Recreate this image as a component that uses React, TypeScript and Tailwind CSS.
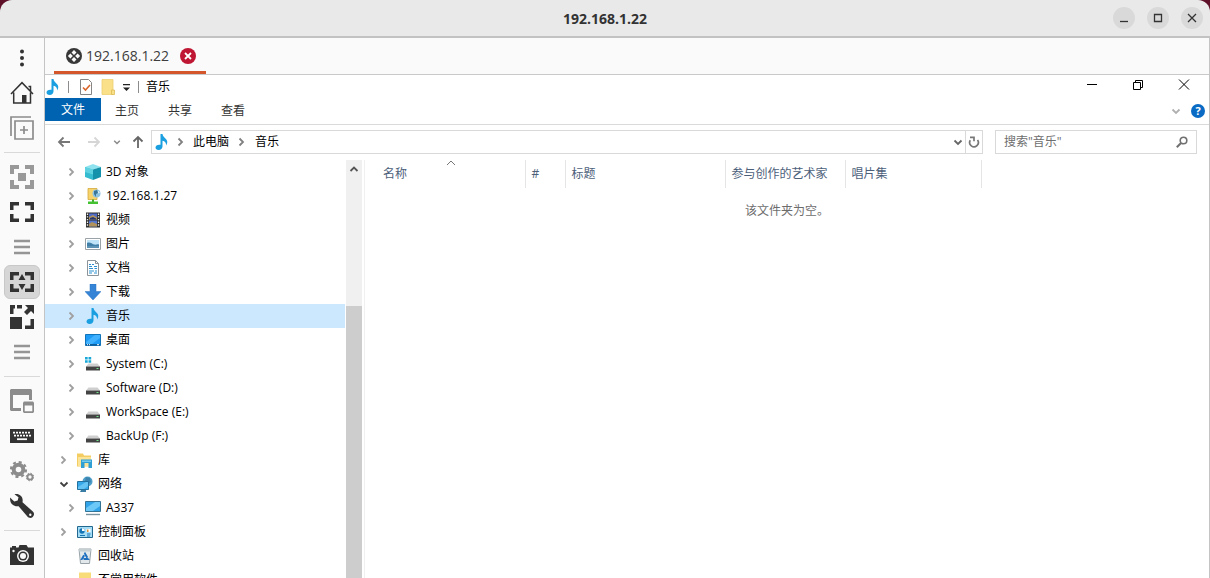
import type { ReactNode } from 'react'

type TreeItem = {
  label: string
  icon: keyof typeof TREE_ICONS
  level: 0 | 1
  state?: 'open' | 'closed'
  selected?: boolean
}

const NOTE = 'M6.5 0h2c.3 2.2 1.6 3.2 2.9 4.5 2.300 2.100 2.500 4.300.7 7.100.2-2.800-1.200-4.200-3.600-4.800v5.400c0 2.200-1.600 3.800-3.900 3.800-1.900 0-3.100-1-3.100-2.500 0-2 2.300-3.300 5-2.700z'

function MusicIcon() {
  return (
    <svg className="h-4 w-4 shrink-0" viewBox="0 0 16 16">
      <path d={NOTE} fill="#1a9fe0" />
    </svg>
  )
}

function Chevron({ dir, className }: { dir: 'right' | 'down' | 'up'; className: string }) {
  const d = { right: 'M2.5 1.5L6 5 2.5 8.500', down: 'M1.500 3.500L5 7l3.500-3.500', up: 'M1.500 7L5 3.500 8.500 7' }[dir]
  return (
    <svg className={className} viewBox="0 0 10 10" fill="none" stroke="currentColor" strokeWidth={1.8}>
      <path d={d} />
    </svg>
  )
}

function Drive() {
  return (
    <>
      <path d="M3.5 7.5h9l2.500 3H1z" fill="#cfcfcf" />
      <path d="M1 10.500h14v4H1z" fill="#444" />
      <path d="M11.500 12h2v1h-2z" fill="#6fe08a" />
    </>
  )
}

const TREE_ICONS = {
  cube: (
    <>
      <path d="M0 3l8-3 8 3-8 2.500z" fill="#8fe3ee" />
      <path d="M0 3l8 2.500V16l-8-3z" fill="#35bcd0" />
      <path d="M8 5.500L16 3v10l-8 3z" fill="#1592ab" />
      <path d="M0 3l8 2.500v5L0 8z" fill="#5fd2e1" />
    </>
  ),
  ftp: (
    <>
      <path d="M3 .5h9v11H3z" fill="#f7d36b" stroke="#d5a93b" strokeWidth=".8" />
      <circle cx="11.500" cy="5.500" r="4" fill="#8cc4e2" />
      <path d="M9 3l3-1 1 3-2 1v3l-2-3z" fill="#3a7699" />
      <path d="M13 2.500l2 2-2 1z" fill="#d9f0fa" />
      <path d="M7 11.500h2v2.500H7z" fill="#3dae2b" />
      <path d="M3 13.500h10V16H3z" fill="#45c232" />
    </>
  ),
  video: (
    <>
      <path d="M1 .5h14v15H1z" fill="#2f2f2f" />
      <path d="M4 1.500h8v6H4z" fill="#506cc7" />
      <path d="M4 8.500h8v6H4z" fill="#5577cf" />
      <path d="M4 5l4-2 4 2.500v2H4zM4 12l3-2 5 2v2.500H4z" fill="#b0925a" />
      <path d="M5 6l3-1 3 1.500v1H5z" fill="#26366e" />
      <path d="M2.500 1.500v13M13.500 1.500v13" stroke="#f2f2f2" strokeWidth="1.300" strokeDasharray="1.400 1.300" />
    </>
  ),
  picture: (
    <>
      <path d="M.5 2.500h15v11H.5z" fill="#fff" stroke="#9aa3a8" />
      <path d="M2 4h12v8H2z" fill="#bfe3f7" />
      <path d="M2 7c3-1.500 5 1 7 1.500s3-.5 5 0v2H2z" fill="#3f7fa8" />
      <path d="M2 10h12v2H2z" fill="#5c93b4" />
    </>
  ),
  document: (
    <>
      <path d="M2.500.5h8l3 3v12h-11z" fill="#fff" stroke="#8b9499" />
      <path d="M10.500.5v3h3" fill="none" stroke="#8b9499" />
      <path d="M4 4.500h2m1 0h2M4 6.500h3m2 0h3M4 8.500h4M4 11h5m1 0h2M4 13h3m2 0h3M9.500 8.500H12" stroke="#2d8fd0" strokeWidth="1.200" />
    </>
  ),
  download: <path d="M5 0h6v7.500h5L8 16 0 7.500h5z" fill="#3584d6" stroke="#2a74c2" strokeWidth=".5" />,
  music: <path d={NOTE} fill="#1a9fe0" />,
  desktop: (
    <>
      <path d="M.5 2.500h15v11H.5z" fill="#1e9bf5" stroke="#1173b8" />
      <path d="M1 10l9-7h5v3l-8 6H1z" fill="#42b2ff" />
      <path d="M1 12h14v1.500H1z" fill="#0f5f9b" />
      <path d="M2 12.700h1m1 0h1m7 0h2" stroke="#fff" />
    </>
  ),
  system: (
    <>
      <path d="M0 1h2.700v2.500H0zM3.500 1h2.700v2.500H3.500zM0 4.200h2.700v2.500H0zM3.500 4.200h2.700v2.500H3.500z" fill="#19a9d8" />
      <Drive />
    </>
  ),
  drive: <Drive />,
  library: (
    <>
      <path d="M0 1.500h6l1 2h7v11H0z" fill="#f3cd62" />
      <path d="M1 5h13v9H1z" fill="#fbe397" />
      <path d="M4 7.500h11V16h-3.500v-5h-4v5H4z" fill="#2f9fd4" />
      <path d="M5 8.500h9v1.500H5z" fill="#76cbec" />
    </>
  ),
  network: (
    <>
      <circle cx="10.500" cy="5.500" r="5" fill="#4f9fca" />
      <path d="M9 1l4 1 1 4-3 2-3-3z" fill="#3a84af" />
      <path d="M.5 5.500h11v8H.5z" fill="#37a9ea" stroke="#23719f" />
      <path d="M1 11l8-5h2v4l-4 3H1z" fill="#66c4f4" />
      <path d="M4 14h5v2H3z" fill="#397da5" />
    </>
  ),
  computer: (
    <>
      <path d="M.5 1.500h15v10H.5z" fill="#31a3e8" stroke="#347394" />
      <path d="M1 8l9-6h5v4l-7 5H1z" fill="#6bc8f7" />
      <path d="M1 14.500h14" stroke="#79929f" strokeWidth="1.400" />
    </>
  ),
  control: (
    <>
      <path d="M.5 2.500h15v11H.5z" fill="#a5dcf6" stroke="#23688f" />
      <circle cx="5" cy="7" r="2.700" fill="#1675b6" />
      <path d="M5 7V4.300A2.700 2.700 0 017.700 7z" fill="#fff" />
      <path d="M9.500 5h4v3h-4z" fill="#fff" />
      <path d="M10 5.500h1.500V8H10z" fill="#e08b2e" />
      <path d="M3 11.500h5m2-1.500h3.500M10 12h3" stroke="#1675b6" strokeWidth="1.200" />
    </>
  ),
  recycle: (
    <>
      <path d="M2 1h12l-1.500 14.500h-9z" fill="#e3e8ea" stroke="#98a3a9" />
      <path d="M2 1h12l-.3 2.500H2.300z" fill="#c5ced2" />
      <path d="M8 5.800l3 5.200H5z" fill="none" stroke="#1f6fc0" strokeWidth="2" strokeDasharray="4.600 1.200" />
    </>
  ),
  folder: (
    <>
      <path d="M2 .5h12v15H2z" fill="#f7dc79" />
      <path d="M11 12h3.500v4H11z" fill="#e9bf4f" />
    </>
  ),
}

const TREE: TreeItem[] = [
  { label: '3D 对象', icon: 'cube', level: 1, state: 'closed' },
  { label: '192.168.1.27', icon: 'ftp', level: 1, state: 'closed' },
  { label: '视频', icon: 'video', level: 1, state: 'closed' },
  { label: '图片', icon: 'picture', level: 1, state: 'closed' },
  { label: '文档', icon: 'document', level: 1, state: 'closed' },
  { label: '下载', icon: 'download', level: 1, state: 'closed' },
  { label: '音乐', icon: 'music', level: 1, state: 'closed', selected: true },
  { label: '桌面', icon: 'desktop', level: 1, state: 'closed' },
  { label: 'System (C:)', icon: 'system', level: 1, state: 'closed' },
  { label: 'Software (D:)', icon: 'drive', level: 1, state: 'closed' },
  { label: 'WorkSpace (E:)', icon: 'drive', level: 1, state: 'closed' },
  { label: 'BackUp (F:)', icon: 'drive', level: 1, state: 'closed' },
  { label: '库', icon: 'library', level: 0, state: 'closed' },
  { label: '网络', icon: 'network', level: 0, state: 'open' },
  { label: 'A337', icon: 'computer', level: 1, state: 'closed' },
  { label: '控制面板', icon: 'control', level: 0, state: 'closed' },
  { label: '回收站', icon: 'recycle', level: 0 },
  { label: '不常用软件', icon: 'folder', level: 0 },
]

const CORNERS = 'M0 0h9v4H4v5H0zM15 0h9v9h-4V4h-5zM0 15h4v5h5v4H0zM20 15h4v9h-9v-4h5z'
const CORNERS_WIDE = 'M0 2h9v3.500H3.500V10H0zM15 2h9v8h-3.500V5.500H15zM0 14h3.500v4.500H9V22H0zM20.500 14H24v8h-9v-3.500h5.500z'

function Lines() {
  return <path d="M4 6h16M4 12h16M4 18h16" stroke="#959595" strokeWidth="2.400" />
}

const TOOL_GROUPS: { name: string; icon: ReactNode; active?: boolean }[][] = [
  [
    {
      name: 'Menu',
      icon: (
        <g fill="#333">
          <circle cx="12" cy="5.500" r="2" />
          <circle cx="12" cy="12" r="2" />
          <circle cx="12" cy="18.500" r="2" />
        </g>
      ),
    },
    {
      name: 'Home',
      icon: (
        <>
          <path d="M1 13L12 1.700 23 13M3.700 11.500V22h16.800V11.500M20.500 10V5.500h-2" fill="none" stroke="#333" strokeWidth="1.500" />
          <path d="M12 14h4.500v8H12z" fill="#333" />
        </>
      ),
    },
    {
      name: 'New connection',
      icon: <path d="M1 20V1h20M5 5h18v18H5zM14 10v8M10 14h8" fill="none" stroke="#8c8c8c" strokeWidth="1.700" />,
    },
  ],
  [
    {
      name: 'Fit window',
      icon: (
        <g fill="#999">
          <path d={CORNERS} />
          <path d="M8 8h8v8H8z" />
        </g>
      ),
    },
    { name: 'Fullscreen', icon: <path d={CORNERS_WIDE} fill="#333" /> },
    { name: 'Multi monitor', icon: <Lines /> },
    {
      name: 'Dynamic resolution',
      active: true,
      icon: (
        <g fill="#333">
          <path d={CORNERS_WIDE} />
          <path d="M12 4l3.500 6h-7zM12 20l-3.500-6h7z" />
        </g>
      ),
    },
    {
      name: 'Scaled mode',
      icon: (
        <g fill="#333">
          <path d="M0 12h12v12H0zM0 0h5v3.500H3.500V9H0zM7 0h5v3.500H7zM20.500 14H24v10h-9v-3.500h5.500z" />
          <path d="M15 0h9v9l-3-3-4 4-3-3 4-4z" />
        </g>
      ),
    },
    { name: 'Scaling options', icon: <Lines /> },
  ],
  [
    {
      name: 'Switch tab',
      icon: (
        <>
          <path d="M1 0h20l1 1v10h-3V6H3v13h8v3H1l-1-1V1z" fill="#8c8c8c" />
          <path d="M14 12.500h9l1 1V23l-1 1h-9l-1-1v-9.500z" fill="#8c8c8c" />
          <path d="M14.700 16.500h7.600v5.800h-7.600z" fill="#fafafa" />
        </>
      ),
    },
    {
      name: 'Grab keyboard',
      icon: (
        <>
          <path d="M0 5h24v14H0z" fill="#333" />
          <path d="M3 8.700h18M4 11.700h17" stroke="#fafafa" strokeWidth="1.700" strokeDasharray="2 1" />
          <path d="M7 15.200h10" stroke="#fafafa" strokeWidth="1.800" />
        </>
      ),
    },
    {
      name: 'Preferences',
      icon: (
        <g fill="none" stroke="#8c8c8c">
          <circle cx="8.500" cy="10.500" r="4.800" strokeWidth="4" />
          <circle cx="8.500" cy="10.500" r="7.500" strokeWidth="2.200" strokeDasharray="3 2.890" />
          <circle cx="20" cy="18" r="2.600" strokeWidth="1.900" />
          <circle cx="20" cy="18" r="3.800" strokeWidth="1" strokeDasharray="1.500 1.480" />
        </g>
      ),
    },
    {
      name: 'Tools',
      icon: (
        <path fillRule="evenodd" d="M4.500.3c4-1.100 8 1.500 8.200 5.900l-.2 2 10.300 9.300c1.800 1.700 1.500 4-.1 5.500-1.500 1.400-3.800 1.300-5.300-.5L8.600 12.200C4.500 13 .6 10.400.2 6.300L0 3.500l4.300 4 3.400-.9.800-3.300zM20.300 19.500a1.200 1.200 0 100 2.400 1.200 1.200 0 000-2.400z" fill="#333" />
      ),
    },
  ],
  [
    {
      name: 'Screenshot',
      icon: (
        <>
          <path d="M0 4.500h2V3h4v1.500h2.500L9.500 2h7L18 4.500h6V22H0z" fill="#333" />
          <circle cx="13" cy="13" r="6" fill="#fafafa" />
          <circle cx="13" cy="13" r="4.500" fill="#333" />
          <circle cx="13" cy="13" r="3" fill="#fafafa" />
          <circle cx="3.500" cy="8" r="1.200" fill="#fafafa" />
        </>
      ),
    },
  ],
]

function TitleBar() {
  return (
    <header className="relative flex h-[38px] shrink-0 items-center justify-end gap-3 rounded-t-xl border-b-2 border-[#c2c2c2] bg-[#e9e9e9] pr-[7px]">
      <h1 className="absolute inset-x-0 top-2 text-center text-sm leading-[22px] font-bold text-[#333]">192.168.1.22</h1>
      {['M4 11.500h8', 'M4.500 4.500h7v7h-7z', 'M4 4l8 8M12 4l-8 8'].map((d, i) => (
        <button key={d} aria-label={['Minimize', 'Maximize', 'Close'][i]} className="relative flex h-[22px] w-[22px] items-center justify-center rounded-full bg-[#d9d9d9]">
          <svg className="h-4 w-4" viewBox="0 0 16 16" fill="none" stroke="#333" strokeWidth={1.3}>
            <path d={d} />
          </svg>
        </button>
      ))}
    </header>
  )
}

function Toolbar() {
  return (
    <nav className="flex w-[45px] shrink-0 flex-col items-center gap-px border-r border-[#c4c4c4] bg-[#fafafa] pt-[3px]">
      {TOOL_GROUPS.map((group, i) => (
        <div key={i} className="flex flex-col items-center gap-px">
          {i > 0 && <div className="my-1.5 h-px w-9 bg-[#d9d9d9]" />}
          {group.map((tool) => (
            <button
              key={tool.name}
              aria-label={tool.name}
              className={
                tool.active
                  ? 'flex h-[34px] w-9 items-center justify-center rounded-md border border-[#c8c8c8] bg-[#d6d6d6]'
                  : 'flex h-[34px] w-9 items-center justify-center'
              }
            >
              <svg className="h-6 w-6 shrink-0" viewBox="0 0 24 24">{tool.icon}</svg>
            </button>
          ))}
        </div>
      ))}
    </nav>
  )
}

function TabBar() {
  return (
    <div className="flex h-[37px] shrink-0 border-b border-[#c9c9c9] bg-[#fafafa] pl-[9px]">
      <div className="flex items-center border-b-[3px] border-[#d4572b] pt-0.5 pr-2.5 pl-3">
        <svg className="h-4 w-4" viewBox="0 0 16 16">
          <circle cx="8" cy="8" r="8" fill="#383838" />
          <path d="M8 1.900l2.500 2.500L8 6.900 5.500 4.400zM4.400 5.500L6.900 8l-2.500 2.500L1.900 8zM11.600 5.500L14.100 8l-2.500 2.500L9.100 8zM8 9.100l2.500 2.500L8 14.100l-2.500-2.500z" fill="#fafafa" />
        </svg>
        <span className="mr-[11px] ml-1 text-sm text-[#3d3d3d]">192.168.1.22</span>
        <button aria-label="Close tab">
          <svg className="h-4 w-4" viewBox="0 0 16 16">
            <circle cx="8" cy="8" r="8" fill="#bf1633" />
            <path d="M5 5l6 6M11 5l-6 6" stroke="#fff" strokeWidth="1.800" />
          </svg>
        </button>
      </div>
    </div>
  )
}

function ExplorerTitle() {
  return (
    <div className="flex h-[23px] shrink-0 items-center pr-0.5">
      <MusicIcon />
      <div className="ml-[7px] h-3 w-px bg-[#8c8c8c]" />
      <button aria-label="属性" className="ml-[9px]">
        <svg className="h-4 w-4" viewBox="0 0 16 16">
          <path d="M2.500.5h8l3 3v12h-11z" fill="#fff" stroke="#858585" />
          <path d="M5 8.500l2.500 2.500L12 6" fill="none" stroke="#d9652b" strokeWidth="1.600" />
        </svg>
      </button>
      <button aria-label="新建文件夹" className="ml-1.5">
        <svg className="h-4 w-4" viewBox="0 0 16 16">
          <path d="M2 .5h11v15H2z" fill="#fbe08a" stroke="#edcf73" strokeWidth=".8" />
          <path d="M11.500 11h3v4.500h-3z" fill="#fbe08a" stroke="#d9b64b" strokeWidth=".7" />
        </svg>
      </button>
      <button aria-label="自定义快速访问工具栏" className="ml-[5px]">
        <svg className="h-2.5 w-2.5" viewBox="0 0 10 10">
          <path d="M2 2h7v1.200H2zM2 5.500h7L5.500 9z" fill="#222" />
        </svg>
      </button>
      <div className="ml-[7px] h-3 w-px bg-[#8c8c8c]" />
      <span className="ml-[7px] flex-1 text-xs text-black">音乐</span>
      {['M3 7.500h10', 'M3.500 5.500h7v7h-7zM5.500 5.500v-2h7v7h-2', 'M3 2.500l10 10M13 2.500l-10 10'].map((d, i) => (
        <button key={d} aria-label={['最小化', '还原', '关闭'][i]} className="flex h-full w-[46px] items-start justify-center pt-0.5">
          <svg className="h-4 w-4" viewBox="0 0 16 16" fill="none" stroke="#000">
            <path d={d} />
          </svg>
        </button>
      ))}
    </div>
  )
}

function Ribbon() {
  return (
    <div className="flex h-[27px] shrink-0 items-start gap-px border-b border-[#dadada] text-xs text-[#333]">
      <button className="-mr-px h-[23px] w-14 bg-[#0063b1] pt-px text-white">文件</button>
      {['主页', '共享', '查看'].map((label) => (
        <button key={label} className="h-[25px] px-3.5">{label}</button>
      ))}
      <div className="flex h-[25px] flex-1 items-center justify-end gap-2.5 pr-1">
        <button aria-label="展开功能区">
          <Chevron dir="down" className="h-2.5 w-2.5 text-[#b0b0b0]" />
        </button>
        <button aria-label="帮助" className="h-3.5 w-3.5 rounded-full bg-[#0a6bc4] text-center text-[11px] leading-[14px] font-bold text-white">?</button>
      </div>
    </div>
  )
}

function NavArrow({ d, label, color }: { d: string; label: string; color: string }) {
  return (
    <button aria-label={label} className={color}>
      <svg className="h-[18px] w-[18px]" viewBox="0 0 18 18" fill="none" stroke="currentColor" strokeWidth={1.8}>
        <path d={d} />
      </svg>
    </button>
  )
}

function AddressRow() {
  return (
    <div className="mb-0.5 flex h-[33px] shrink-0 items-center pr-3 pl-2.5 text-xs">
      <div className="flex items-center gap-3">
        <NavArrow d="M15 9H4M8.500 4.500L4 9l4.500 4.500" label="后退" color="text-[#777]" />
        <NavArrow d="M3 9h11M9.500 4.500L14 9l-4.500 4.500" label="前进" color="text-[#d6d6d6]" />
      </div>
      <button aria-label="最近浏览的位置" className="mx-2.5">
        <Chevron dir="down" className="h-2 w-2 text-[#888]" />
      </button>
      <NavArrow d="M9 15V4M4.500 8.500L9 4l4.500 4.500" label="上移" color="-ml-0.5 text-[#666]" />
      <div className="ml-1 flex h-6 flex-1 items-center border border-[#d9d9d9] pl-0.5 text-black">
        <MusicIcon />
        <Chevron dir="right" className="mx-1.5 h-2.5 w-2.5 text-[#808080]" />
        <button className="mx-px">此电脑</button>
        <Chevron dir="right" className="mx-[7px] h-2.5 w-2.5 text-[#808080]" />
        <button className="mx-px">音乐</button>
        <button aria-label="历史记录" className="mr-0.5 ml-auto">
          <Chevron dir="down" className="h-2.5 w-2.5 text-[#666]" />
        </button>
        <button aria-label="刷新" className="flex h-full w-[17px] items-center justify-center border-l border-[#d9d9d9]">
          <svg className="h-3 w-3" viewBox="0 0 12 12" fill="none" stroke="#777" strokeWidth={1.7}>
            <path d="M9.500 4A4.300 4.300 0 112.300 4.300M2 1.300h4v4" />
          </svg>
        </button>
      </div>
      <label className="ml-3 flex h-6 w-[202px] items-center border border-[#d9d9d9] px-2">
        <input aria-label="搜索" placeholder='搜索"音乐"' className="min-w-0 flex-1 outline-none placeholder:text-[#6d6d6d]" />
        <svg className="h-3 w-3" viewBox="0 0 12 12" fill="none" stroke="#707070" strokeWidth={1.6}>
          <circle cx="7.500" cy="4.500" r="3.300" />
          <path d="M5 7L.8 11.200" strokeWidth={2} />
        </svg>
      </label>
    </div>
  )
}

function TreeRow({ item }: { item: TreeItem }) {
  return (
    <li
      className={[
        'flex h-6 items-center text-xs whitespace-nowrap text-black',
        item.level === 1 ? 'pl-[22px]' : 'pl-3.5',
        item.selected ? 'bg-[#cce8ff]' : '',
      ].join(' ')}
    >
      <span className="w-2.5">
        {item.state === 'closed' && <Chevron dir="right" className="h-2.5 w-2.5 text-[#a0a0a0]" />}
        {item.state === 'open' && <Chevron dir="down" className="h-2.5 w-2.5 text-[#404040]" />}
      </span>
      <svg className="mr-[5px] ml-2 h-4 w-4 shrink-0" viewBox="0 0 16 16">{TREE_ICONS[item.icon]}</svg>
      {item.label}
    </li>
  )
}

function FileList() {
  return (
    <main className="min-w-0 flex-1 border-l border-[#f0f0f0] text-xs">
      <table className="ml-2 table-fixed border-collapse text-left">
        <thead>
          <tr className="h-7 text-[#4c607a]">
            <th className="relative w-[152px] border-r border-[#e5e5e5] pl-2.5 font-normal">
              名称
              <svg className="absolute -top-0.5 left-[73px] h-2.5 w-2.5" viewBox="0 0 10 10" fill="none" stroke="#777">
                <path d="M1 7l4-4 4 4" />
              </svg>
            </th>
            <th className="w-10 border-r border-[#e5e5e5] pl-1.5 font-normal">#</th>
            <th className="w-40 border-r border-[#e5e5e5] pl-1.5 font-normal">标题</th>
            <th className="w-[120px] border-r border-[#e5e5e5] pl-1.5 font-normal">参与创作的艺术家</th>
            <th className="w-[136px] border-r border-[#e5e5e5] pl-1.5 font-normal">唱片集</th>
          </tr>
        </thead>
      </table>
      <p className="mt-[15px] text-center text-[#6d6d6d]">该文件夹为空。</p>
    </main>
  )
}

export default function App() {
  return (
    <div className="flex h-screen flex-col overflow-hidden bg-[#5e1029] font-['Open_Sans','Noto_Sans_CJK_SC',sans-serif]">
      <TitleBar />
      <div className="flex min-h-0 flex-1 bg-white">
        <Toolbar />
        <div className="flex min-w-0 flex-1 flex-col border-r border-[#c4c4c4]">
          <TabBar />
          <ExplorerTitle />
          <Ribbon />
          <AddressRow />
          <div className="flex min-h-0 flex-1">
            <ul className="w-[300px] shrink-0 overflow-hidden">
              {TREE.map((item) => (
                <TreeRow key={item.label} item={item} />
              ))}
            </ul>
            <div className="mr-0.5 ml-px flex w-4 shrink-0 flex-col bg-[#f0f0f0]">
              <button aria-label="向上滚动" className="flex h-[146px] justify-center pt-1">
                <Chevron dir="up" className="h-2.5 w-2.5 text-[#555]" />
              </button>
              <div className="flex-1 bg-[#cdcdcd]" />
            </div>
            <FileList />
          </div>
        </div>
      </div>
    </div>
  )
}
